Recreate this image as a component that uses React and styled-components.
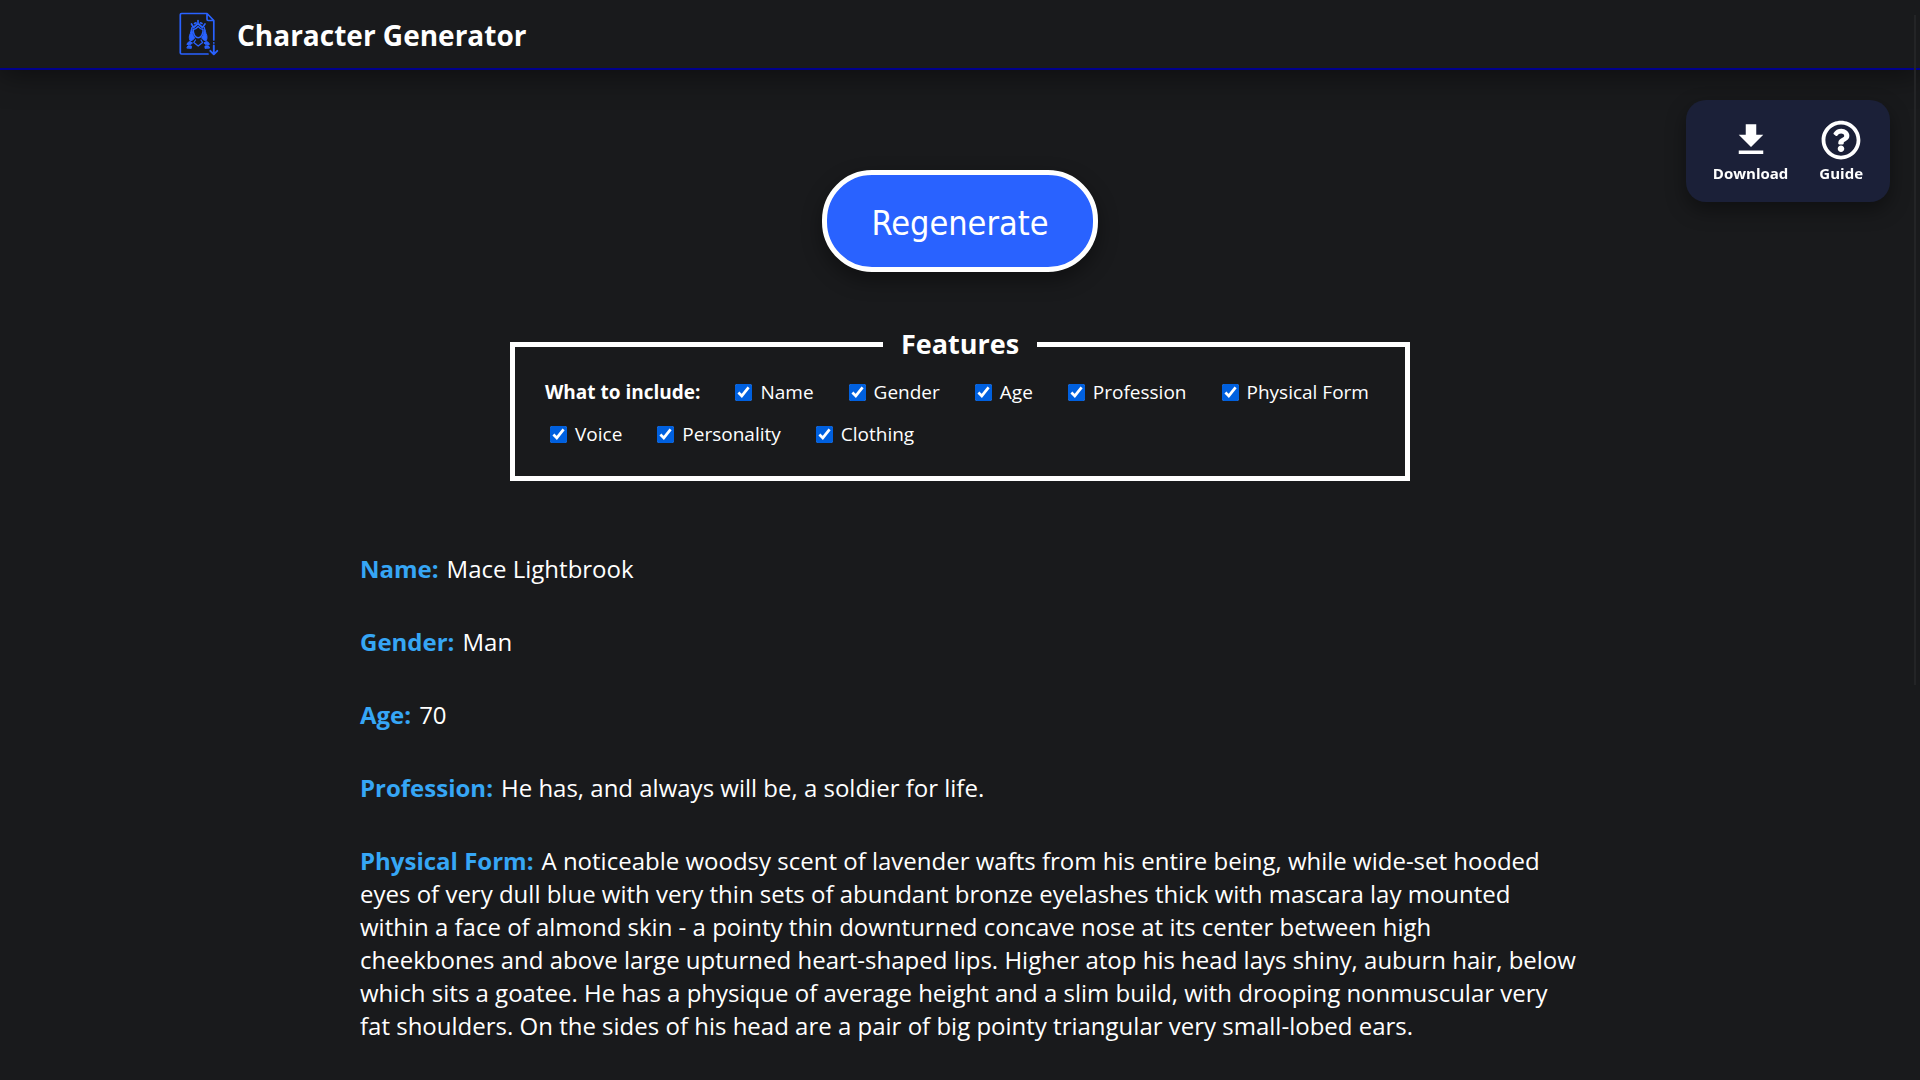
import React, { useState } from 'react';
import styled, { createGlobalStyle } from 'styled-components';
import { MdFileDownload } from 'react-icons/md';
import { FaRegQuestionCircle } from 'react-icons/fa';

const GlobalStyle = createGlobalStyle`
  *, *::before, *::after { box-sizing: border-box; }
  body {
    margin: 0;
    background: #191a1c;
    color: #fff;
    font-family: "Segoe UI", "Open Sans", "Noto Sans", sans-serif;
  }
`;

const Header = styled.header`
  position: relative;
  background: #191a1c;
  border-bottom: 2px solid #00008b;
  box-shadow: 0 4px 30px rgba(0, 0, 0, 0.5);
`;

const HeaderInner = styled.div`
  display: flex;
  align-items: center;
  gap: 18px;
  max-width: 1562px;
  min-height: 68px;
  margin: 0 auto;
`;

const Title = styled.h1`
  margin: 0;
  padding-top: 2px;
  font-size: 28px;
  line-height: 37px;
  font-weight: 700;
`;

const Logo = styled.svg`
  width: 40px;
  height: 44px;
  fill: none;
  stroke: #2962ff;
  stroke-width: 1.7;
  stroke-linecap: round;
  stroke-linejoin: round;
`;

const Actions = styled.nav`
  position: fixed;
  top: 100px;
  right: 30px;
  display: flex;
  gap: 31px;
  padding: 19px 27px;
  border-radius: 20px;
  background: #1b2038;
  box-shadow: 0 8px 20px rgba(0, 0, 0, 0.4);
`;

const ActionButton = styled.button`
  display: flex;
  flex-direction: column;
  align-items: center;
  gap: 2px;
  padding: 0;
  border: 0;
  background: none;
  color: #fff;
  font: inherit;
  font-size: 15px;
  line-height: 20px;
  font-weight: 700;
  cursor: pointer;

  svg {
    width: 42px;
    height: 42px;
    padding: ${({ $inset }) => $inset}px;
  }
`;

const Main = styled.main`
  display: flex;
  flex-direction: column;
  align-items: center;
  padding-top: 100px;
`;

const RegenerateButton = styled.button`
  padding: 27px 44px 23px;
  border: 5px solid #fff;
  border-radius: 50px;
  background: #2962ff;
  color: #fff;
  font-family: Tahoma, "DejaVu Sans Condensed", sans-serif;
  font-size: 34px;
  line-height: 42px;
  box-shadow: 0 8px 20px rgba(0, 0, 0, 0.4);
  cursor: pointer;
`;

const Features = styled.fieldset`
  width: 100%;
  max-width: 900px;
  margin: 54px 0 0;
  padding: 8px 30px 21px;
  border: 5px solid #fff;
`;

const FeaturesTitle = styled.legend`
  margin: 0 auto;
  padding: 0 18px 2px;
  font-size: 27px;
  line-height: 35px;
  font-weight: 700;
`;

const Options = styled.div`
  display: flex;
  flex-wrap: wrap;
  column-gap: 30px;
  line-height: 42px;
`;

const OptionsLabel = styled.span`
  font-size: 19px;
  font-weight: 700;
`;

const Option = styled.label`
  display: flex;
  align-items: center;
  gap: 8px;
  padding-left: 5px;
  font-size: 19px;
`;

const Checkbox = styled.input`
  width: 17px;
  height: 17px;
  margin: 0;
  accent-color: #0060df;
`;

const Character = styled.article`
  width: 100%;
  max-width: 1200px;
  margin-top: 71px;
`;

const Trait = styled.p`
  margin: 0 -20px 40px 0;
  font-size: 24px;
  line-height: 33px;
  white-space: pre-line;

  &:last-child { margin-bottom: 20px; }
`;

const TraitName = styled.strong`
  margin-right: 8px;
  color: #36a6f5;
`;

const ScrollThumb = styled.div`
  position: fixed;
  top: 15px;
  right: 4px;
  width: 2px;
  height: 62vh;
  background: #232426;
`;

const featureNames = [
  'Name', 'Gender', 'Age', 'Profession', 'Physical Form', 'Voice', 'Personality', 'Clothing',
];

const traits = [
  ['Name', 'Mace Lightbrook'],
  ['Gender', 'Man'],
  ['Age', '70'],
  ['Profession', 'He has, and always will be, a soldier for life.'],
  ['Physical Form', `A noticeable woodsy scent of lavender wafts from his entire being, while wide-set hooded
eyes of very dull blue with very thin sets of abundant bronze eyelashes thick with mascara lay mounted
within a face of almond skin - a pointy thin downturned concave nose at its center between high
cheekbones and above large upturned heart-shaped lips. Higher atop his head lays shiny, auburn hair, below
which sits a goatee. He has a physique of average height and a slim build, with drooping nonmuscular very
fat shoulders. On the sides of his head are a pair of big pointy triangular very small-lobed ears.`],
];

function CharacterLogo() {
  return (
    <Logo viewBox="9 7 40 44" aria-hidden="true">
      {/* page with a folded corner */}
      <path d="M38 49H11.5Q10.3 49 10.3 47.8V9.7Q10.3 8.5 11.5 8.5H37L43.8 15.5V35M37 8.5V14.3Q37 15.5 38.2 15.5H43.8M43.8 37.8V38" />
      <path d="M43.8 40.5V49M40.3 45.8L43.8 49.3L47.3 45.8" strokeWidth="1.9" />
      {/* crown */}
      <path d="M28 15.5V19M21.5 19L23.5 22.5L28 18.5L32.5 22.5L35 19M24.5 18.5L26 17.8M30.5 17.8L32 18.5" strokeWidth="1.7" />
      {/* face and hair */}
      <path d="M23.4 24.5C22.8 29 25.5 32.8 28.2 32.8S33.4 29 33 24.5C30.5 24.5 29 22.5 28.2 21.5C27 23 25.5 24.3 23.4 24.5Z" strokeWidth="1.4" />
      <path fill="#2962ff" strokeWidth="1" d="M22 22.5C20.5 26 21 27.5 19.5 30.5C19 33 19.5 35 20.5 36C22.8 35 24.5 34 24.5 32.5C22.7 30.5 22 27 22 22.5ZM34.3 22.5C35.8 26 35.3 27.5 36.8 30.5C37.3 33 36.8 35 35.8 36C33.5 35 31.8 34 31.8 32.5C33.6 30.5 34.3 27 34.3 22.5Z" />
      {/* collar and shoulders */}
      <path d="M25.5 35L23.8 37.5L28.2 41L32.6 37.5L31 35" strokeWidth="1.3" />
      <path fill="#2962ff" strokeWidth="1" d="M17 39Q18 36.5 20 36.5L22.5 38L20.5 39.5ZM39.4 39Q38.4 36.5 36.4 36.5L33.9 38L35.9 39.5ZM17 42.7L18 40.8L21.3 41V43ZM39.4 42.7L38.4 40.8L35 41V43Z" />
    </Logo>
  );
}

export default function App() {
  const [included, setIncluded] = useState(() => new Set(featureNames));

  const toggle = (name) => {
    const next = new Set(included);
    if (!next.delete(name)) next.add(name);
    setIncluded(next);
  };

  return (
    <>
      <GlobalStyle />
      <Header>
        <HeaderInner>
          <CharacterLogo />
          <Title>Character Generator</Title>
        </HeaderInner>
      </Header>
      <Actions>
        <ActionButton type="button" $inset={0}><MdFileDownload />Download</ActionButton>
        <ActionButton type="button" $inset={1}><FaRegQuestionCircle />Guide</ActionButton>
      </Actions>
      <Main>
        <RegenerateButton type="button">Regenerate</RegenerateButton>
        <Features>
          <FeaturesTitle>Features</FeaturesTitle>
          <Options>
            <OptionsLabel>What to include:</OptionsLabel>
            {featureNames.map((name) => (
              <Option key={name}>
                <Checkbox type="checkbox" checked={included.has(name)} onChange={() => toggle(name)} />
                {name}
              </Option>
            ))}
          </Options>
        </Features>
        <Character>
          {traits.map(([name, text]) => (
            <Trait key={name}>
              <TraitName>{name}:</TraitName>
              {text}
            </Trait>
          ))}
        </Character>
      </Main>
      <ScrollThumb />
    </>
  );
}
